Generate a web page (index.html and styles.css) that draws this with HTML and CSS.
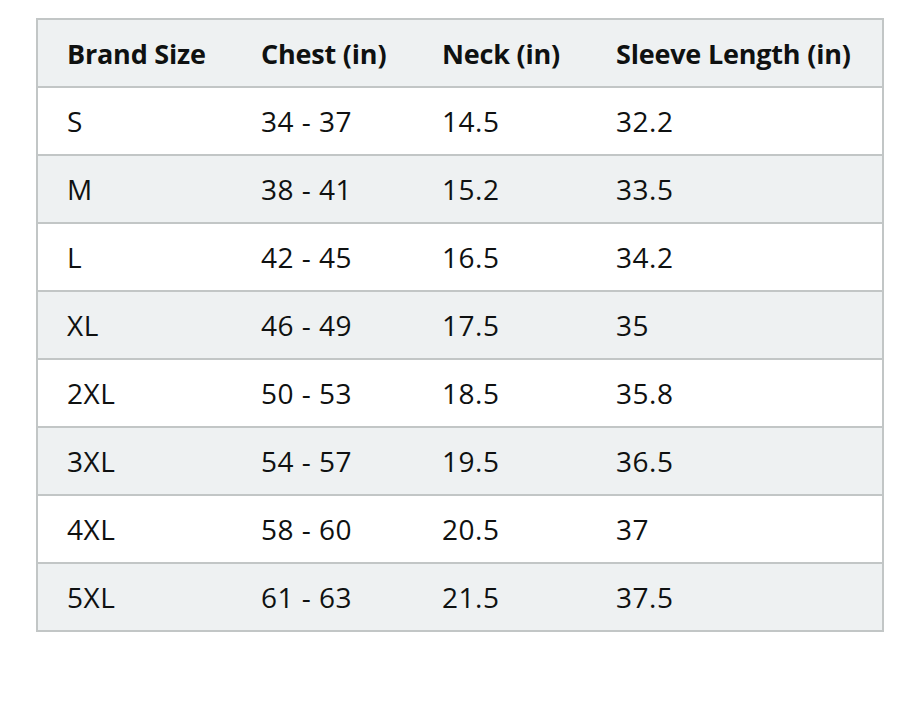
FILE: index.html
```html
<!DOCTYPE html>
<html lang="en">
<head>
<meta charset="utf-8">
<title>Size chart</title>
<link rel="stylesheet" href="styles.css">
</head>
<body>
<table class="size-table">
  <colgroup>
    <col class="c1"><col class="c2"><col class="c3"><col class="c4">
  </colgroup>
  <thead>
    <tr><th>Brand Size</th><th>Chest (in)</th><th>Neck (in)</th><th>Sleeve Length (in)</th></tr>
  </thead>
  <tbody>
    <tr><td>S</td><td>34 - 37</td><td>14.5</td><td>32.2</td></tr>
    <tr><td>M</td><td>38 - 41</td><td>15.2</td><td>33.5</td></tr>
    <tr><td>L</td><td>42 - 45</td><td>16.5</td><td>34.2</td></tr>
    <tr><td>XL</td><td>46 - 49</td><td>17.5</td><td>35</td></tr>
    <tr><td>2XL</td><td>50 - 53</td><td>18.5</td><td>35.8</td></tr>
    <tr><td>3XL</td><td>54 - 57</td><td>19.5</td><td>36.5</td></tr>
    <tr><td>4XL</td><td>58 - 60</td><td>20.5</td><td>37</td></tr>
    <tr><td>5XL</td><td>61 - 63</td><td>21.5</td><td>37.5</td></tr>
  </tbody>
</table>
</body>
</html>
```
FILE: styles.css
```css
html, body {
  margin: 0;
  padding: 0;
  background: #ffffff;
}
body {
  padding: 18px 0 0 36px;
  font-family: "Open Sans", "Noto Sans", sans-serif;
  color: #0f1111;
}
.size-table {
  border-collapse: collapse;
  table-layout: fixed;
  width: 848px;
  border: 2px solid #c2c6c6;
  font-size: 28px;
}
.c1 { width: 195px; }
.c2 { width: 181px; }
.c3 { width: 174px; }
.c4 { width: auto; }
.size-table th,
.size-table td {
  height: 68px;
  padding: 0 0 0 29px;
  text-align: left;
  vertical-align: middle;
  border-bottom: 2px solid #c2c6c6;
  box-sizing: border-box;
  white-space: nowrap;
}
.size-table th {
  font-size: 27px;
  font-weight: 700;
  letter-spacing: -0.2px;
  background: #eef1f2;
}
.size-table td {
  font-weight: 400;
  letter-spacing: 0.5px;
}
.size-table tbody tr:nth-child(even) td {
  background: #eef1f2;
}
```
